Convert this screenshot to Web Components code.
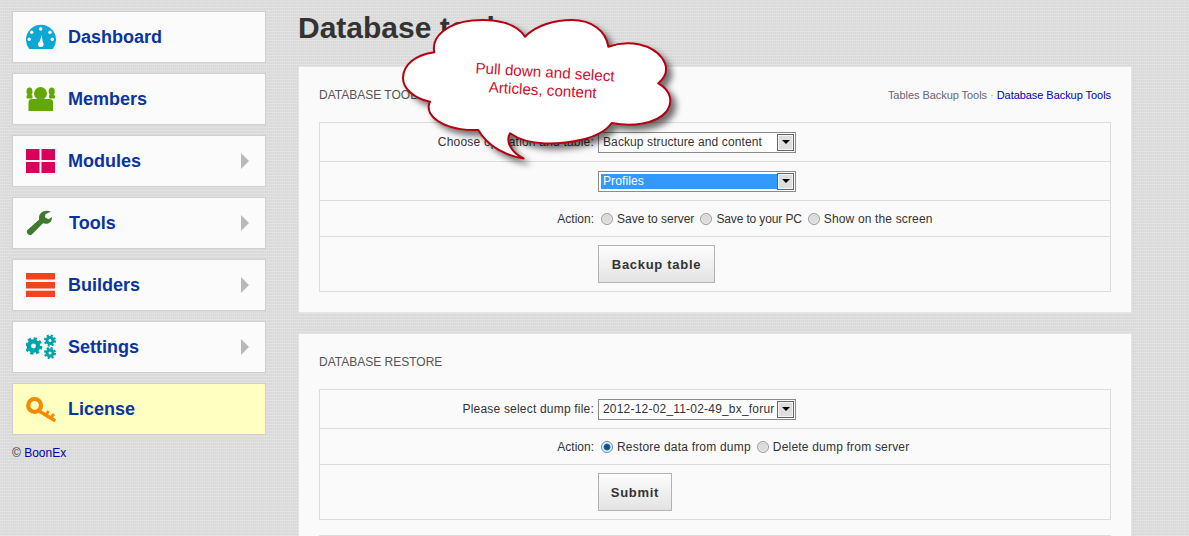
<!DOCTYPE html>
<html>
<head>
<meta charset="utf-8">
<title>Database tools</title>
<style>
html, body {
  margin: 0;
  height: 536px;
  overflow: hidden;
}
body {
  position: relative;
  font-family: "Liberation Sans", Arial, sans-serif;
  color: #333;
  background-color: #dedede;
  background-image:
    repeating-linear-gradient(0deg, rgba(255,255,255,.14) 0 1px, rgba(0,0,0,.015) 1px 3px),
    repeating-linear-gradient(90deg, rgba(255,255,255,.06) 0 1px, rgba(0,0,0,.012) 1px 2px);
}
</style>
</head>
<body>
<admin-page>
  <side-nav slot="nav">
    <nav-item label="Dashboard">
      <svg slot="icon" width="30" height="26" viewBox="0 0 30 26">
        <path d="M3.2 25A15 15 0 1 1 26.8 25Z" fill="#0da7d6"/>
        <g fill="#fff"><circle cx="14.7" cy="5" r="1.7"/><circle cx="5.7" cy="8.3" r="1.7"/><circle cx="24" cy="8.3" r="1.7"/><circle cx="3.3" cy="15.3" r="1.7"/><circle cx="26.3" cy="15.3" r="1.7"/><path d="M13 20L15.7 11L17 20Z"/><circle cx="14.8" cy="20.3" r="2.8"/></g>
      </svg>
    </nav-item>
    <nav-item label="Members">
      <svg slot="icon" width="30" height="26" viewBox="0 0 30 26">
        <g fill="#62a800"><circle cx="14.5" cy="7.5" r="6.5"/><path d="M2.5 16Q2.5 13 6 13H23Q27 13 27 16V25H2.5Z"/><ellipse cx="3.5" cy="5.5" rx="3" ry="4"/><ellipse cx="25.7" cy="5.5" rx="3" ry="4"/><rect x="0.5" y="9" width="6" height="3.5" rx="1"/><rect x="23" y="9" width="6" height="3.5" rx="1"/></g>
      </svg>
    </nav-item>
    <nav-item label="Modules" arrow>
      <svg slot="icon" width="30" height="26" viewBox="0 0 30 26">
        <g fill="#d9005c"><rect x="0" y="1" width="13.5" height="11"/><rect x="15.5" y="1" width="13.5" height="11"/><rect x="0" y="14" width="13.5" height="11"/><rect x="15.5" y="14" width="13.5" height="11"/></g>
      </svg>
    </nav-item>
    <nav-item label="Tools" arrow label-x="1">
      <svg slot="icon" width="30" height="26" viewBox="0 0 30 26">
        <path d="M25 1.6C21.5 .2 17.5 .6 15 3C13 5 12.6 7.3 13.2 9.6L1.4 20Q.4 21.2 1 23L2.6 24.8Q4.4 25.6 5.8 24.4L17 13.2C20 14.2 23 13.6 25 11.4Q26 9.8 26 7L22.4 9.2L19 7.2L19.4 4.2Z" fill="#3f7a2e"/>
      </svg>
    </nav-item>
    <nav-item label="Builders" arrow>
      <svg slot="icon" width="30" height="26" viewBox="0 0 30 26">
        <g fill="#ee4420"><rect x="0" y="1" width="29" height="6.5"/><rect x="0" y="10" width="29" height="6.5"/><rect x="0" y="18.7" width="29" height="6.3"/></g>
      </svg>
    </nav-item>
    <nav-item label="Settings" arrow>
      <svg slot="icon" width="30" height="26" viewBox="0 0 30 26">
        <g fill="none" stroke="#00a3a8">
          <circle cx="7.5" cy="12" r="4.6" stroke-width="4.4"/>
          <circle cx="7.5" cy="12" r="7.4" stroke-width="2.8" stroke-dasharray="3.2 2.6"/>
          <circle cx="24" cy="6.5" r="3" stroke-width="3"/>
          <circle cx="24" cy="6.5" r="5" stroke-width="2.2" stroke-dasharray="2.1 1.83"/>
          <circle cx="24" cy="19" r="3" stroke-width="3"/>
          <circle cx="24" cy="19" r="5" stroke-width="2.2" stroke-dasharray="2.1 1.83"/>
        </g>
      </svg>
    </nav-item>
    <nav-item label="License" highlight>
      <svg slot="icon" width="30" height="26" viewBox="0 0 30 26">
        <g fill="none" stroke="#f58a00"><circle cx="8.6" cy="9.4" r="6.4" stroke-width="4.2"/><path d="M13 15L28 24" stroke-width="3.6" stroke-linecap="round"/><path d="M20 19L22.5 15M25 21.5L28 18" stroke-width="2.8"/></g>
      </svg>
    </nav-item>
    <copy-note>BoonEx</copy-note>
  </side-nav>

  <page-title slot="main">Database tools</page-title>

  <tool-panel slot="main" heading="DATABASE TOOLS" links>
    <form-row label="Choose operation and table:" height="39"><drop-select value="Backup structure and content"></drop-select></form-row>
    <form-row height="39"><drop-select value="Profiles" selected></drop-select></form-row>
    <form-row label="Action:" height="36">
      <radio-opt style="letter-spacing:0">Save to server</radio-opt><radio-opt style="letter-spacing:-.13px">Save to your PC</radio-opt><radio-opt style="letter-spacing:.15px">Show on the screen</radio-opt>
    </form-row>
    <form-row height="55"><push-button width="117">Backup table</push-button></form-row>
  </tool-panel>

  <tool-panel slot="main" heading="DATABASE RESTORE" tall>
    <form-row label="Please select dump file:" height="39"><drop-select style="letter-spacing:.2px" value="2012-12-02_11-02-49_bx_forur"></drop-select></form-row>
    <form-row label="Action:" height="36">
      <radio-opt checked>Restore data from dump</radio-opt><radio-opt>Delete dump from server</radio-opt>
    </form-row>
    <form-row height="55"><push-button width="74">Submit</push-button></form-row>
  </tool-panel>
</admin-page>
<cloud-callout></cloud-callout>

<script>
class AdminPage extends HTMLElement {
  connectedCallback() {
    this.attachShadow({ mode: 'open' }).innerHTML = `
<style>
:host { display: flex; align-items: flex-start; }
.nav { width: 254px; margin: 11px 0 0 12px; flex: none; }
.main { width: 834px; margin-left: 32px; flex: none; }
</style>
<div class="nav"><slot name="nav"></slot></div>
<div class="main"><slot name="main"></slot></div>`;
  }
}

class SideNav extends HTMLElement {
  connectedCallback() {
    this.attachShadow({ mode: 'open' }).innerHTML = `
<style>:host { display: flex; flex-direction: column; gap: 10px; }</style>
<slot></slot>`;
  }
}

class NavItem extends HTMLElement {
  connectedCallback() {
    const shift = this.getAttribute('label-x') || 0;
    this.attachShadow({ mode: 'open' }).innerHTML = `
<style>
:host {
  display: flex;
  align-items: center;
  box-sizing: border-box;
  height: 52px;
  padding-left: 13px;
  background: #fbfbfb;
  border: 1px solid #cfcfcf;
  font: bold 18px "Liberation Sans", Arial, sans-serif;
  color: #0a34a0;
}
:host([highlight]) { background: #ffffc2; }
.icon { width: 30px; height: 26px; flex: none; }
.icon ::slotted(svg) { display: block; }
.label { margin-left: ${12 + Number(shift)}px; flex: 1; }
.arrow {
  width: 0; height: 0; margin-right: 16px;
  border-left: 8px solid #b9b9b9;
  border-top: 8px solid transparent;
  border-bottom: 8px solid transparent;
}
</style>
<div class="icon"><slot name="icon"></slot></div>
<span class="label">${this.getAttribute('label')}</span>
${this.hasAttribute('arrow') ? '<span class="arrow"></span>' : ''}`;
  }
}

class CopyNote extends HTMLElement {
  connectedCallback() {
    this.attachShadow({ mode: 'open' }).innerHTML = `
<style>
:host { display: block; margin-top: 1px; font: 12px "Liberation Sans", Arial, sans-serif; color: #333; }
a { color: #0000a8; text-decoration: none; }
</style>
© <a href="#"><slot></slot></a>`;
  }
}

class PageTitle extends HTMLElement {
  connectedCallback() {
    this.attachShadow({ mode: 'open' }).innerHTML = `
<style>
:host { display: block; height: 66px; font: bold 30px/56px "Liberation Sans", Arial, sans-serif; color: #333; }
</style>
<slot></slot>`;
  }
}

class ToolPanel extends HTMLElement {
  connectedCallback() {
    this.attachShadow({ mode: 'open' }).innerHTML = `
<style>
:host {
  display: block;
  box-sizing: border-box;
  padding: 0 20px 20px;
  margin-bottom: 20px;
  background: #fafafa;
  border: 1px solid #e4e4e4;
}
:host([tall]) { padding-bottom: 0; margin-bottom: 0; border-bottom: 0; }
header {
  display: flex;
  justify-content: space-between;
  align-items: center;
  height: 55px;
  font-size: 12px;
  color: #555;
}
.links { font-size: 11px; letter-spacing: -.05px; color: #667; }
.links a { color: #0000c0; text-decoration: none; }
.links i { font-style: normal; color: #9ab; margin: 0 3px; }
.rows { border: 1px solid #dcdcdc; border-bottom: 0; }
.more { margin-top: 15px; border-top: 1px solid #dcdcdc; }
</style>
<header>
  <span>${this.getAttribute('heading')}</span>
  ${this.hasAttribute('links') ? '<span class="links">Tables Backup Tools<i>·</i><a href="#">Database Backup Tools</a></span>' : ''}
</header>
<div class="rows"><slot></slot></div>
${this.hasAttribute('tall') ? '<div class="more"></div>' : ''}`;
  }
}

class FormRow extends HTMLElement {
  connectedCallback() {
    this.attachShadow({ mode: 'open' }).innerHTML = `
<style>
:host {
  display: grid;
  grid-template-columns: 274px 1fr;
  column-gap: 4px;
  align-items: center;
  box-sizing: border-box;
  height: ${this.getAttribute('height')}px;
  border-bottom: 1px solid #dcdcdc;
  font: 12px "Liberation Sans", Arial, sans-serif;
  letter-spacing: .2px;
  color: #333;
}
.label { text-align: right; }
.label.short { letter-spacing: 0; }
.value { display: flex; align-items: center; gap: 6px; }
</style>
<div class="label${this.getAttribute('label') === 'Action:' ? ' short' : ''}">${this.getAttribute('label') || ''}</div>
<div class="value"><slot></slot></div>`;
  }
}

class DropSelect extends HTMLElement {
  connectedCallback() {
    this.attachShadow({ mode: 'open' }).innerHTML = `
<style>
:host {
  display: flex;
  box-sizing: border-box;
  width: 198px;
  height: 21px;
  padding: 2px 1px 2px 2px;
  background: #fff;
  border: 1px solid #8a8a8a;
  font: 12px/15px "Liberation Sans", Arial, sans-serif;
  letter-spacing: .1px;
  color: #333;
}
.text {
  flex: 1;
  min-width: 0;
  padding: 0 2px;
  overflow: hidden;
  white-space: nowrap;
}
:host([selected]) .text { background: #3399ff; color: #fff; }
.btn {
  flex: none;
  display: flex;
  align-items: center;
  justify-content: center;
  box-sizing: border-box;
  width: 17px;
  margin: -1px 0;
  background: #dedede;
  border: 1px solid #666;
  box-shadow: inset 0 0 0 1px #f5f5f5;
}
.btn::after {
  content: "";
  border-top: 4px solid #000;
  border-left: 4px solid transparent;
  border-right: 4px solid transparent;
}
</style>
<span class="text">${this.getAttribute('value')}</span>
<span class="btn"></span>`;
  }
}

class RadioOpt extends HTMLElement {
  connectedCallback() {
    this.attachShadow({ mode: 'open' }).innerHTML = `
<style>
:host { display: inline-flex; align-items: center; gap: 4px; margin-left: 3px; margin-right: -3px; }
.dot {
  width: 10px; height: 10px;
  border: 1px solid #9a9a9a;
  border-radius: 50%;
  background: radial-gradient(circle at 50% 60%, #dcdcdc 0 45%, #c4c4c4 70%, #efefef 100%);
  box-shadow: inset 0 0 0 1px #f2f2f2;
}
:host([checked]) .dot {
  background: radial-gradient(circle, #0a4f96 0 30%, #1c85c8 45%, #eef3f7 55%);
  border-color: #6f8797;
}
</style>
<span class="dot"></span><span><slot></slot></span>`;
  }
}

class PushButton extends HTMLElement {
  connectedCallback() {
    this.attachShadow({ mode: 'open' }).innerHTML = `
<style>
:host {
  display: flex;
  align-items: center;
  justify-content: center;
  box-sizing: border-box;
  width: ${this.getAttribute('width')}px;
  height: 38px;
  background: linear-gradient(#fdfdfd, #e3e3e3);
  border: 1px solid #b2b2b2;
  font: bold 13px "Liberation Sans", Arial, sans-serif;
  letter-spacing: .7px;
  color: #333;
}
</style>
<slot></slot>`;
  }
}

class CloudCallout extends HTMLElement {
  connectedCallback() {
    this.attachShadow({ mode: 'open' }).innerHTML = `
<style>
:host { position: absolute; left: 0; top: 0; width: 1189px; height: 536px; pointer-events: none; }
svg { display: block; overflow: visible; }
path { filter: drop-shadow(5px 5px 3px rgba(0,0,0,.55)); }
text { font: 15.2px "Liberation Sans", Arial, sans-serif; fill: #d0102c; text-anchor: middle; }
</style>
<svg width="1189" height="536">
  <path fill="#fff" stroke="#b5000f" stroke-width="2" stroke-linejoin="round"
    d="M434.3 52.3C431 36 448 23 472 20.5C497 18 517 24 525 36.7C536 25 555 20 572 20C592 20 606 31 608.3 46.7C630 39 652 45 662 58C669 68 667 76 658.3 83.3C672 91 673 103 666 112C656 124 632 127 611.7 123C600 140 565 144 545 143.5C531 143 518 139 510 133.3C505 142 512 153 523.5 158.5C507 156 488 147 478.3 130C458 131 437 125 430 113C428 108 428 105 430 101.7C413 98 403 88 403 78C403 65 415 55 434.3 52.3Z"/>
  <text x="544.7" y="77.3" transform="rotate(3.4 544.7 77.3)">Pull down and select</text>
  <text x="542.4" y="95.3" transform="rotate(3.1 542.4 95.3)">Articles, content</text>
</svg>`;
  }
}

customElements.define('admin-page', AdminPage);
customElements.define('side-nav', SideNav);
customElements.define('nav-item', NavItem);
customElements.define('copy-note', CopyNote);
customElements.define('page-title', PageTitle);
customElements.define('tool-panel', ToolPanel);
customElements.define('form-row', FormRow);
customElements.define('drop-select', DropSelect);
customElements.define('radio-opt', RadioOpt);
customElements.define('push-button', PushButton);
customElements.define('cloud-callout', CloudCallout);
</script>
</body>
</html>
